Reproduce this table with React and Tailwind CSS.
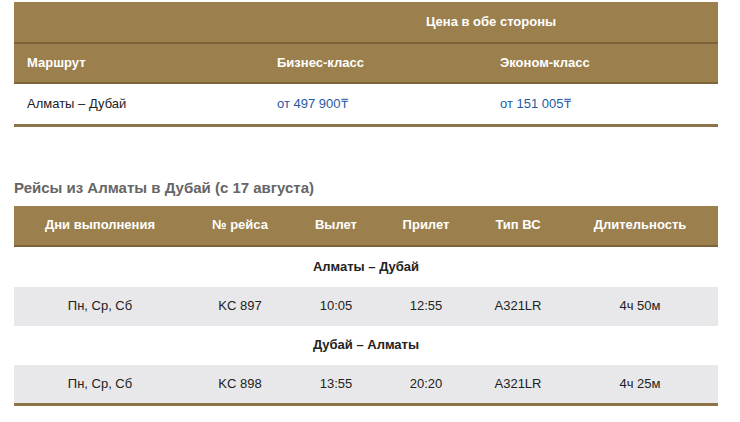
import React from 'react';

const font = { fontFamily: '"Liberation Sans", Arial, sans-serif' };

const flights = [
    { group: 'Алматы – Дубай', days: 'Пн, Ср, Сб', no: 'KC 897', dep: '10:05', arr: '12:55', type: 'A321LR', dur: '4ч 50м', gh: 'h-[41px]', rh: 'h-[39px]' },
    { group: 'Дубай – Алматы', days: 'Пн, Ср, Сб', no: 'KC 898', dep: '13:55', arr: '20:20', type: 'A321LR', dur: '4ч 25м', gh: 'h-[39px]', rh: 'h-[40px]' },
];

const App = () => {
    return (
        <div className="bg-white w-[740px] h-[422px] overflow-hidden pt-[2px] px-[14px] text-[13px] text-[#222]" style={font}>
            {/* Prices */}
            <table className="w-[704px] table-fixed border-collapse">
                <colgroup>
                    <col className="w-[250px]" />
                    <col className="w-[223px]" />
                    <col className="w-[231px]" />
                </colgroup>
                <thead>
                    <tr className="bg-[#9b7f4d] text-white border-b-2 border-[#7b6439]">
                        <th className="h-[41px]"></th>
                        <th colSpan={2} className="h-[41px] font-bold text-center">Цена в обе стороны</th>
                    </tr>
                    <tr className="bg-[#9b7f4d] text-white border-b-2 border-[#7b6439]">
                        <th className="h-[40px] text-left pl-[13px] font-bold">Маршрут</th>
                        <th className="h-[40px] text-left pl-[13px] font-bold">Бизнес-класс</th>
                        <th className="h-[40px] text-left pl-[13px] font-bold">Эконом-класс</th>
                    </tr>
                </thead>
                <tbody>
                    <tr className="border-b-[3px] border-[#8c7348]">
                        <td className="h-[42px] pl-[13px]">Алматы – Дубай</td>
                        <td className="h-[42px] pl-[13px] text-[#1f5aa6]">от 497 900₸</td>
                        <td className="h-[42px] pl-[13px] text-[#1f5aa6]">от 151 005₸</td>
                    </tr>
                </tbody>
            </table>

            {/* Flights */}
            <h2 className="mt-[51px] mb-[8px] text-[15px] leading-[20px] font-bold text-[#666]">
                Рейсы из Алматы в Дубай (с 17 августа)
            </h2>
            <table className="w-[704px] table-fixed border-collapse text-center">
                <colgroup>
                    <col className="w-[172px]" />
                    <col className="w-[108px]" />
                    <col className="w-[84px]" />
                    <col className="w-[96px]" />
                    <col className="w-[88px]" />
                    <col className="w-[156px]" />
                </colgroup>
                <thead>
                    <tr className="bg-[#9b7f4d] text-white border-b-2 border-[#7b6439]">
                        <th className="h-[40px] font-bold">Дни выполнения</th>
                        <th className="h-[40px] font-bold">№ рейса</th>
                        <th className="h-[40px] font-bold">Вылет</th>
                        <th className="h-[40px] font-bold">Прилет</th>
                        <th className="h-[40px] font-bold">Тип ВС</th>
                        <th className="h-[40px] font-bold">Длительность</th>
                    </tr>
                </thead>
                <tbody>
                    {flights.map((f, i) => (
                        <React.Fragment key={f.no}>
                            <tr>
                                <td colSpan={6} className={`${f.gh} font-bold text-[#222]`}>{f.group}</td>
                            </tr>
                            <tr className={`bg-[#e8e8ea] ${i === flights.length - 1 ? 'border-b-[3px] border-[#8c7348]' : ''}`}>
                                <td className={f.rh}>{f.days}</td>
                                <td className={f.rh}>{f.no}</td>
                                <td className={f.rh}>{f.dep}</td>
                                <td className={f.rh}>{f.arr}</td>
                                <td className={f.rh}>{f.type}</td>
                                <td className={f.rh}>{f.dur}</td>
                            </tr>
                        </React.Fragment>
                    ))}
                </tbody>
            </table>
        </div>
    );
};

export default App;
